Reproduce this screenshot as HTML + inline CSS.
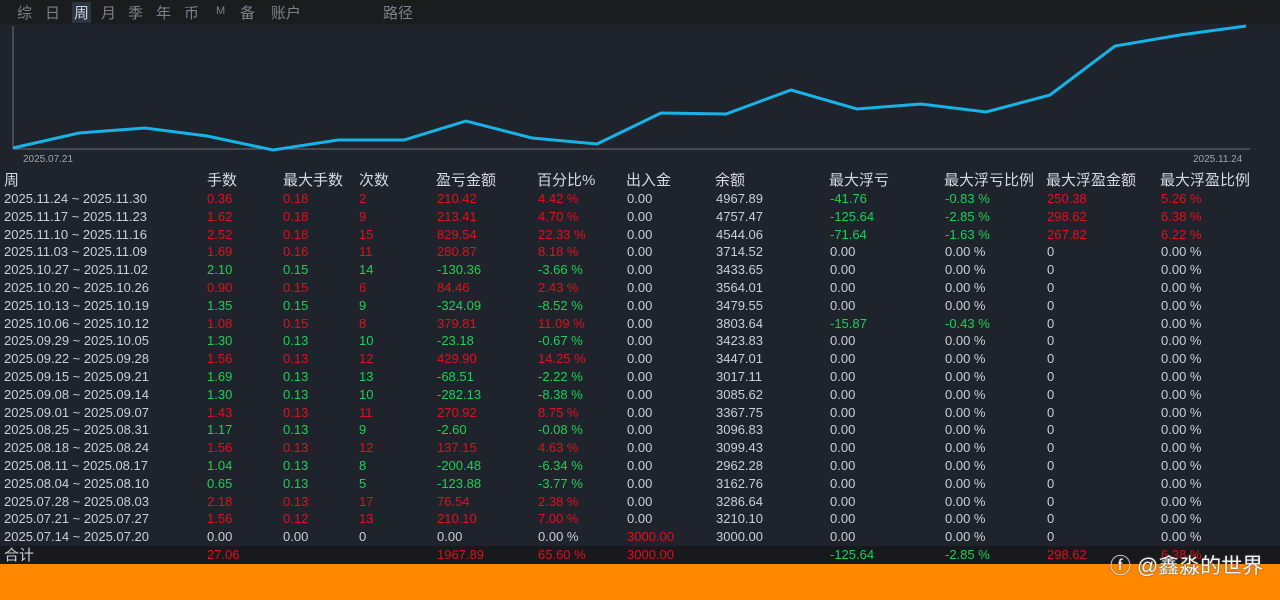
<!DOCTYPE html>
<html><head><meta charset="utf-8"><style>
*{margin:0;padding:0;box-sizing:border-box}
body{width:1280px;height:600px;background:#1f242c;font-family:"Liberation Sans","Noto Sans CJK SC",sans-serif;color:#cfd3d9;position:relative;overflow:hidden;font-size:13px}
.top{position:absolute;left:0;top:0;width:1280px;height:24px;background:#1b1c1e}
.top span{position:absolute;top:2px;font-size:15px;color:#7c8088}
.row{position:absolute;left:0;width:1280px;height:18px;line-height:18px}
.row span{position:absolute;top:0;white-space:nowrap}
.r{color:#e0101c}.g{color:#1fcf55}.w{color:#c9cfd8}
.hd span{font-size:15px;color:#d6d9de}
.tot{background:#17191c;top:546px;height:18px}
.orange{position:absolute;left:0;top:564px;width:1280px;height:36px;background:#ff8800}
.wm{position:absolute;left:1110px;top:550px;font-size:21px;color:#f4f4f4;text-shadow:0 0 2px #555}
</style></head><body>
<div class="top">
<span style="left:17px">综</span><span style="left:45px">日</span>
<span style="left:72px;color:#d0d4da;background:#2c3440;padding:0 2px">周</span>
<span style="left:101px">月</span><span style="left:128px">季</span><span style="left:156px">年</span><span style="left:184px">币</span>
<span style="left:216px;font-size:11px;top:5px">M</span><span style="left:240px">备</span><span style="left:271px">账户</span><span style="left:383px">路径</span>
</div>
<svg style="position:absolute;left:0;top:24px" width="1280" height="146">
<line x1="13" y1="2" x2="13" y2="125" stroke="#6b7078" stroke-width="1"/>
<line x1="13" y1="125" x2="1250" y2="125" stroke="#6b7078" stroke-width="1"/>
<polyline fill="none" stroke="#17b3e6" stroke-width="3" points="13,124 79,109 145,104 207,112 273,126 338,116 404,116 466,97 532,114 597,120 661,89 726,90 791,66 857,85 921,80 986,88 1050,71 1115,22 1180,11 1246,2"/>
<text x="23" y="138" fill="#a0a5ad" font-size="10" font-family="Liberation Sans">2025.07.21</text>
<text x="1193" y="138" fill="#a0a5ad" font-size="10" font-family="Liberation Sans">2025.11.24</text>
</svg>
<div class="row hd" style="top:171px;height:20px;line-height:20px">
<span style="left:4px">周</span><span style="left:207px">手数</span><span style="left:283px">最大手数</span><span style="left:359px">次数</span><span style="left:436px">盈亏金额</span><span style="left:537px">百分比%</span><span style="left:626px">出入金</span><span style="left:715px">余额</span><span style="left:829px">最大浮亏</span><span style="left:944px">最大浮亏比例</span><span style="left:1046px">最大浮盈金额</span><span style="left:1160px">最大浮盈比例</span>
</div>
<div id="rows"></div>
<div class="row tot"><span style="left:4px;font-size:15px;top:1px" class="w">合计</span><span class="r" style="left:207px">27.06</span><span class="r" style="left:437px">1967.89</span><span class="r" style="left:538px">65.60 %</span><span class="r" style="left:627px">3000.00</span><span class="g" style="left:830px">-125.64</span><span class="g" style="left:945px">-2.85 %</span><span class="r" style="left:1047px">298.62</span><span class="r" style="left:1161px">6.38 %</span></div>
<div class="orange"></div>
<div class="wm">ⓕ @鑫淼的世界</div>
<script>
var d=[
["2025.11.24 ~ 2025.11.30","0.36","0.18","2","210.42","4.42 %","0.00","4967.89","-41.76","-0.83 %","250.38","5.26 %","r","g","r"],
["2025.11.17 ~ 2025.11.23","1.62","0.18","9","213.41","4.70 %","0.00","4757.47","-125.64","-2.85 %","298.62","6.38 %","r","g","r"],
["2025.11.10 ~ 2025.11.16","2.52","0.18","15","829.54","22.33 %","0.00","4544.06","-71.64","-1.63 %","267.82","6.22 %","r","g","r"],
["2025.11.03 ~ 2025.11.09","1.69","0.16","11","280.87","8.18 %","0.00","3714.52","0.00","0.00 %","0","0.00 %","r","w","w"],
["2025.10.27 ~ 2025.11.02","2.10","0.15","14","-130.36","-3.66 %","0.00","3433.65","0.00","0.00 %","0","0.00 %","g","w","w"],
["2025.10.20 ~ 2025.10.26","0.90","0.15","6","84.46","2.43 %","0.00","3564.01","0.00","0.00 %","0","0.00 %","r","w","w"],
["2025.10.13 ~ 2025.10.19","1.35","0.15","9","-324.09","-8.52 %","0.00","3479.55","0.00","0.00 %","0","0.00 %","g","w","w"],
["2025.10.06 ~ 2025.10.12","1.08","0.15","8","379.81","11.09 %","0.00","3803.64","-15.87","-0.43 %","0","0.00 %","r","g","w"],
["2025.09.29 ~ 2025.10.05","1.30","0.13","10","-23.18","-0.67 %","0.00","3423.83","0.00","0.00 %","0","0.00 %","g","w","w"],
["2025.09.22 ~ 2025.09.28","1.56","0.13","12","429.90","14.25 %","0.00","3447.01","0.00","0.00 %","0","0.00 %","r","w","w"],
["2025.09.15 ~ 2025.09.21","1.69","0.13","13","-68.51","-2.22 %","0.00","3017.11","0.00","0.00 %","0","0.00 %","g","w","w"],
["2025.09.08 ~ 2025.09.14","1.30","0.13","10","-282.13","-8.38 %","0.00","3085.62","0.00","0.00 %","0","0.00 %","g","w","w"],
["2025.09.01 ~ 2025.09.07","1.43","0.13","11","270.92","8.75 %","0.00","3367.75","0.00","0.00 %","0","0.00 %","r","w","w"],
["2025.08.25 ~ 2025.08.31","1.17","0.13","9","-2.60","-0.08 %","0.00","3096.83","0.00","0.00 %","0","0.00 %","g","w","w"],
["2025.08.18 ~ 2025.08.24","1.56","0.13","12","137.15","4.63 %","0.00","3099.43","0.00","0.00 %","0","0.00 %","r","w","w"],
["2025.08.11 ~ 2025.08.17","1.04","0.13","8","-200.48","-6.34 %","0.00","2962.28","0.00","0.00 %","0","0.00 %","g","w","w"],
["2025.08.04 ~ 2025.08.10","0.65","0.13","5","-123.88","-3.77 %","0.00","3162.76","0.00","0.00 %","0","0.00 %","g","w","w"],
["2025.07.28 ~ 2025.08.03","2.18","0.13","17","76.54","2.38 %","0.00","3286.64","0.00","0.00 %","0","0.00 %","r","w","w"],
["2025.07.21 ~ 2025.07.27","1.56","0.12","13","210.10","7.00 %","0.00","3210.10","0.00","0.00 %","0","0.00 %","r","w","w"],
["2025.07.14 ~ 2025.07.20","0.00","0.00","0","0.00","0.00 %","3000.00","3000.00","0.00","0.00 %","0","0.00 %","w","w","w"]];
var xs=[4,207,283,359,437,538,627,716,830,945,1047,1161],h="";
d.forEach(function(r,i){h+='<div class="row" style="top:'+(190+i*17.8)+'px">';
for(var c=0;c<12;c++){var cl="w";if(c>=1&&c<=5)cl=r[12];if(c==8||c==9)cl=r[13];if(c>=10)cl=r[14];if(c==6&&r[6]!="0.00")cl="r";
h+='<span class="'+cl+'" style="left:'+xs[c]+'px">'+r[c]+'</span>';}h+='</div>';});
document.getElementById("rows").innerHTML=h;
</script>
</body></html>
